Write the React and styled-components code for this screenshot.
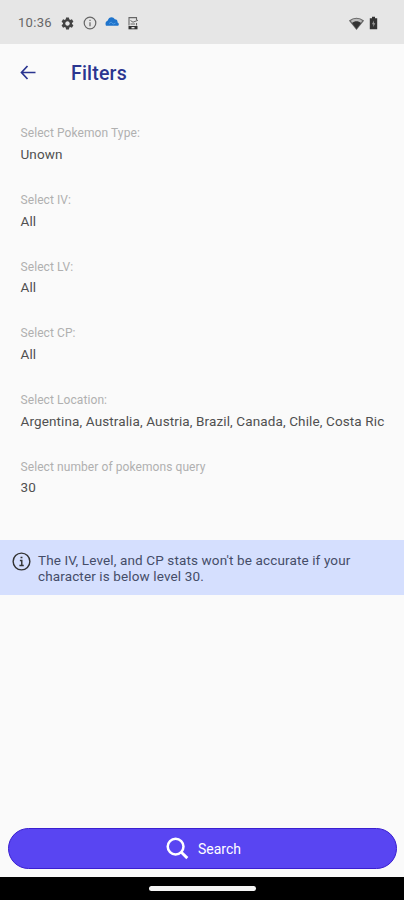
import React from 'react';
import styled, { createGlobalStyle } from 'styled-components';
import { MdSettings } from 'react-icons/md';

const GlobalStyle = createGlobalStyle`
  * {
    box-sizing: border-box;
  }
  body {
    margin: 0;
    background: #fafafa;
    font-family: Roboto, sans-serif;
  }
`;

const Screen = styled.div`
  display: flex;
  flex-direction: column;
  width: 404px;
  height: 900px;
  overflow: hidden;
  background: #fafafa;
`;

const StatusBar = styled.div`
  display: flex;
  align-items: center;
  justify-content: space-between;
  flex: none;
  height: 44px;
  padding: 2px 26px 0 18px;
  background: #e6e6e6;
  color: #444;
`;

const StatusGroup = styled.div`
  display: flex;
  align-items: center;
  gap: ${({ $gap }) => $gap}px;
  svg {
    display: block;
  }
`;

const Clock = styled.span`
  width: 34px;
  font-size: 13px;
  letter-spacing: 0.3px;
  line-height: 16px;
  white-space: nowrap;
  color: #666;
`;

const Header = styled.header`
  display: flex;
  align-items: center;
  flex: none;
  height: 58px;
  padding-left: 20px;
  gap: 35px;
  color: #2a3590;
  svg {
    display: block;
  }
`;

const Title = styled.h1`
  margin: 0;
  padding-top: 2px;
  font-size: 19.5px;
  font-weight: 500;
  line-height: 24px;
  letter-spacing: 0.2px;
`;

const Fields = styled.div`
  display: flex;
  flex-direction: column;
  flex: none;
  padding: 23.4px 18px 0 20.5px;
`;

const Field = styled.div`
  height: 66.7px;
`;

const Label = styled.div`
  font-size: 12px;
  line-height: 17px;
  letter-spacing: 0.08px;
  color: #b0b0b0;
`;

const Value = styled.div`
  margin-top: 3.5px;
  font-size: 13.5px;
  line-height: 17px;
  letter-spacing: 0.12px;
  white-space: nowrap;
  color: #505050;
`;

const Notice = styled.div`
  display: flex;
  flex: none;
  height: 55px;
  margin-top: 14.4px;
  padding: 12px 12px 0;
  gap: 7px;
  background: #d5dffe;
  color: #454d68;
`;

const NoticeText = styled.p`
  margin: 0;
  font-size: 13.5px;
  line-height: 16px;
  letter-spacing: 0.13px;
`;

const SearchButton = styled.button`
  display: flex;
  align-items: center;
  justify-content: center;
  flex: none;
  gap: 9px;
  height: 41px;
  margin: auto 7px 8px 8px;
  padding: 0 0 0 2px;
  border: 1px solid #3a1fd0;
  border-radius: 21px;
  background: #5945f2;
  color: #fff;
  font: 400 14px Roboto, sans-serif;
`;

const NavBar = styled.div`
  display: flex;
  justify-content: center;
  flex: none;
  height: 23px;
  padding-top: 9px;
  background: #000;
`;

const NavHandle = styled.div`
  width: 107px;
  height: 5px;
  border-radius: 3px;
  background: #f5f5f5;
`;

const fields = [
  { label: 'Select Pokemon Type:', value: 'Unown' },
  { label: 'Select IV:', value: 'All' },
  { label: 'Select LV:', value: 'All' },
  { label: 'Select CP:', value: 'All' },
  {
    label: 'Select Location:',
    value: 'Argentina, Australia, Austria, Brazil, Canada, Chile, Costa Ric',
  },
  { label: 'Select number of pokemons query', value: '30' },
];

const InfoIcon = ({ size, stroke }) => (
  <svg width={size} height={size} viewBox="0 0 20 20" fill="none" stroke="#333" strokeWidth={stroke}>
    <circle cx="10" cy="10" r="8.8" />
    <path d="M8.3 9h2v5M7.8 14.2h4.6M9 5.7h2" />
  </svg>
);

const StatusInfoIcon = () => (
  <svg width="14" height="14" viewBox="0 0 14 14" fill="none" stroke="#666" strokeWidth="1.2">
    <circle cx="7" cy="7" r="5.8" />
    <path d="M7 6.2v4M7 3.7v1.3" />
  </svg>
);

const CloudIcon = () => (
  <svg width="14" height="14" viewBox="0 0 14 14">
    <path d="M1 9.7C-.2 7.5 1 5 2.8 4.600 3.400.8 8.300 0 9.800 3.300c2.200 0 3 1.700 2.700 3.300 1.600.5 1.700 2.200.7 3.100z" fill="#1f74cc" />
    <path d="M4 7.600l2.200-1.500 2 2 2.300-1" fill="none" stroke="#5ba5e8" strokeWidth="0.8" />
  </svg>
);

const DeviceIcon = () => (
  <svg width="12" height="14" viewBox="0 0 12 14" fill="none" stroke="#666" strokeWidth="1.1">
    <path d="M2 9.5V1.6h7.5V4M9.5 7v2.5" />
    <path d="M3.5 4.5L6 6.2l5-2M3.5 8H8" strokeWidth="1" />
    <path d="M1.5 10h9v3.3h-9z" fill="#333" stroke="none" />
    <path d="M4.5 11.7h3" stroke="#e6e6e6" strokeWidth="1.4" />
  </svg>
);

const WifiIcon = () => (
  <svg width="15" height="13" viewBox="0 0 15 13">
    <path d="M.8 3.7C4.6.4 10.4.4 14.2 3.7L7.5 12z" fill="#bbb" stroke="#666" strokeWidth="1.2" />
    <path d="M3 6c2.6-2.4 6.400-2.400 9 0L7.500 12z" fill="#333" />
  </svg>
);

const BatteryIcon = () => (
  <svg width="9" height="14" viewBox="0 0 9 14">
    <path d="M3 .7h3v1.6h2.2v11H.8v-11H3z" fill="#333" />
    <path d="M4.9 4.5L2.9 8.3h1.4V11l2-3.800H4.900z" fill="#999" />
  </svg>
);

const BackIcon = () => (
  <svg width="16" height="16" viewBox="0 0 16 16" fill="none" stroke="currentColor" strokeWidth="1.7">
    <path d="M7.5 1l-6 6.5 6 6.5M1.500 7.500h14" />
  </svg>
);

const SearchIcon = () => (
  <svg width="23" height="23" viewBox="0 0 23 23" fill="none" stroke="currentColor" strokeWidth="2.5">
    <circle cx="9.6" cy="9.6" r="7.9" />
    <path d="M15.3 15.300l6 5.800" strokeWidth="2.900" />
  </svg>
);

const App = () => (
  <>
    <GlobalStyle />
    <Screen>
      <StatusBar>
        <StatusGroup $gap={8}>
          <Clock>10:36</Clock>
          <MdSettings size={15} />
          <StatusInfoIcon />
          <CloudIcon />
          <DeviceIcon />
        </StatusGroup>
        <StatusGroup $gap={5}>
          <WifiIcon />
          <BatteryIcon />
        </StatusGroup>
      </StatusBar>
      <Header>
        <BackIcon />
        <Title>Filters</Title>
      </Header>
      <Fields>
        {fields.map(({ label, value }) => (
          <Field key={label}>
            <Label>{label}</Label>
            <Value>{value}</Value>
          </Field>
        ))}
      </Fields>
      <Notice>
        <InfoIcon size={19} stroke={1.5} />
        <NoticeText>
          The IV, Level, and CP stats won't be accurate if your
          <br />
          character is below level 30.
        </NoticeText>
      </Notice>
      <SearchButton type="button">
        <SearchIcon />
        Search
      </SearchButton>
      <NavBar>
        <NavHandle />
      </NavBar>
    </Screen>
  </>
);

export default App;
